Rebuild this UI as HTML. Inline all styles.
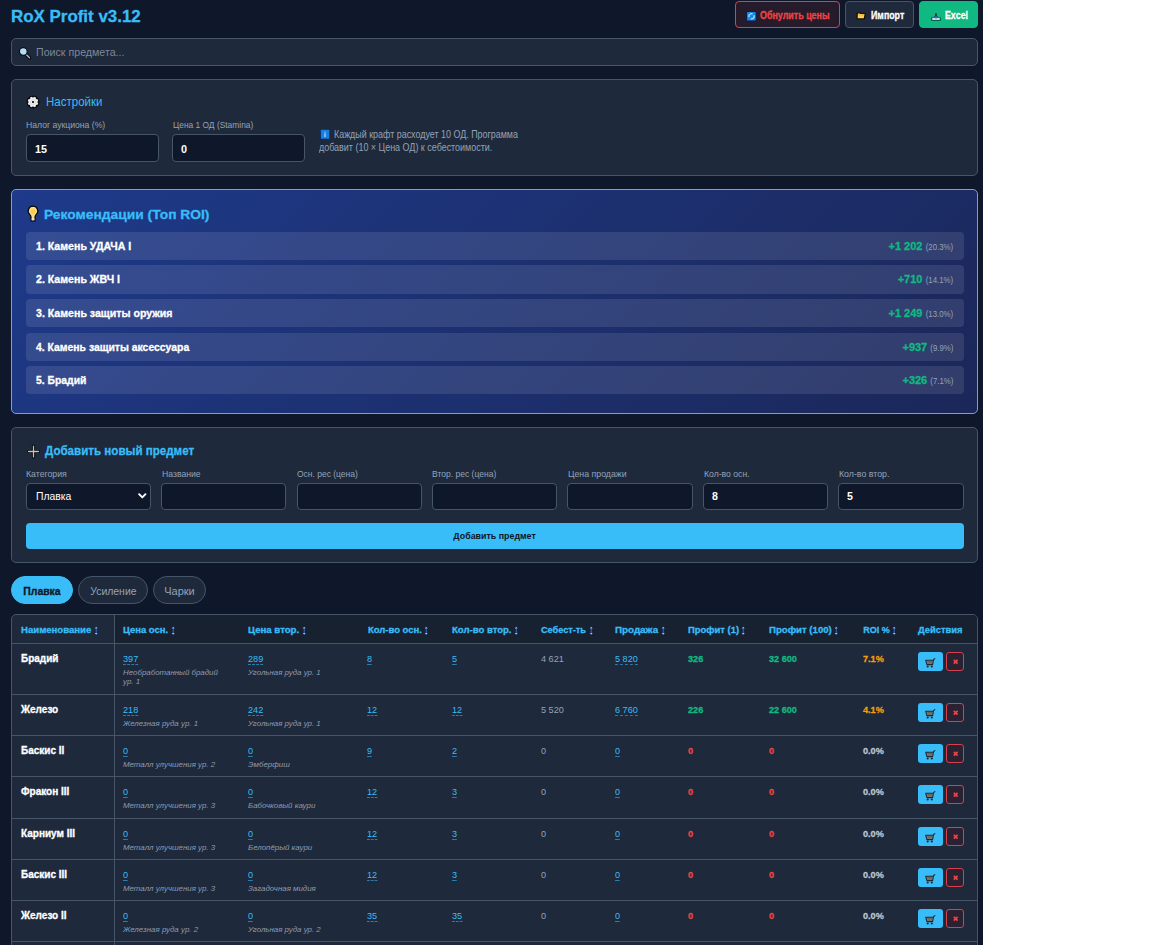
<!DOCTYPE html>
<html lang="ru"><head>
<meta charset="utf-8">
<title>RoX Profit v3.12</title>
<style>
*{box-sizing:border-box;margin:0;padding:0}
html,body{background:#fff;width:1152px;height:945px;overflow:hidden}
body{font-family:"Liberation Sans",sans-serif;color:#f1f5f9;font-size:11px;position:relative}
#app{position:absolute;left:0;top:0;width:983px;height:945px;background:#0f172a;overflow:hidden}
.abs{position:absolute}
h1,.hb,.rec .n,.rec .v,.row .nm,.row .gr,.row .rd,.row .or,.row .z,.th,.btn .t,#t1{-webkit-text-stroke:.3px currentColor}
.rec .v i{-webkit-text-stroke:0}
.t{position:absolute;white-space:nowrap;display:block}
svg{position:absolute;display:block;overflow:visible}
h1{position:absolute;left:11px;top:6px;font-size:16.5px;line-height:20px;font-weight:bold;color:#38bdf8;white-space:nowrap}
.btn{position:absolute;top:1px;height:27px;border-radius:4px;border:1px solid #475569;background:#1e293b;color:#fff;font-weight:bold;font-size:10.2px;line-height:12px}
.btn .t{top:8.3px}
#b1{left:735px;width:105px;border-color:#d9404a;background:#251b2b;color:#ef4444}
#b2{left:845px;width:69px}
#b3{left:919px;width:59px;background:#10b981;border-color:#10b981}
#search{position:absolute;left:11px;top:38px;width:967px;height:28px;border:1px solid #475569;border-radius:5px;background:#1e293b}
#search .t{left:24px;top:7px;line-height:13px;font-size:11px;color:#7d8899}
.panel{position:absolute;left:11px;width:967px;border:1px solid #475569;border-radius:5px;background:#1e293b}
.lbl{position:absolute;font-size:9.6px;line-height:12px;color:#94a3b8;white-space:nowrap}
.inp{position:absolute;height:27px;border:1px solid #475569;border-radius:4px;background:#0f172a;color:#fff;font-weight:bold;font-size:10.6px;line-height:25px;padding-left:8px;white-space:nowrap}
.h2{position:absolute;font-size:13px;line-height:16px;color:#38bdf8;white-space:nowrap}
#recs{position:absolute;left:11px;top:189px;width:967px;height:225px;border:1px solid #62a6f2;border-radius:5px;background:linear-gradient(135deg,#1e3a8a 0%,#1b2759 100%)}
.rec{position:absolute;left:14px;width:938px;height:28px;border-radius:4px;background:rgba(255,255,255,.1);font-weight:bold;font-size:10.6px;line-height:14px;color:#fff;white-space:nowrap}
.rec .n{position:absolute;left:10px;top:7px}
.rec .v{position:absolute;right:10.7px;top:7px;color:#10b981;font-size:11px}
.rec .v i{display:inline-block;font-style:normal;font-weight:normal;font-size:8.6px;color:#94a3b8;margin-left:-2.3px;transform:scaleX(.91);transform-origin:right center}
.tab{position:absolute;top:576px;height:28px;border-radius:14px;border:1px solid #475569;background:#1e293b;color:#94a3b8;font-size:11px;line-height:28px;text-align:center;white-space:nowrap}
.tab span{display:inline-block}
#t1{left:11px;width:62px;background:#38bdf8;border-color:#38bdf8;color:#0f172a;font-weight:bold;font-size:10.6px}
#t2{left:78px;width:70px}
#t3{left:153px;width:53px}
#tbl{position:absolute;left:11px;top:614px;width:967px;height:340px;border:1px solid #475569;border-radius:5px;background:#1e293b;overflow:hidden}
#thead{position:absolute;left:103px;top:0;width:864px;height:28px;background:#18212f}
.hl{position:absolute;left:0;width:965px;height:1px;background:#475569}
.vl{position:absolute;left:102px;top:0;width:1px;height:340px;background:#475569}
.fx{display:inline-block;vertical-align:top}
.th svg{position:static;display:inline-block;vertical-align:top;margin-left:2.4px;margin-top:1.6px}
.th{position:absolute;top:9px;font-size:9px;line-height:12px;font-weight:bold;color:#38bdf8;white-space:nowrap}
.row{position:absolute;left:0;width:965px;height:0}
.row span{position:absolute;white-space:nowrap;font-size:9.6px;line-height:12px;top:10px}
.row .e,.row .g,.row .gr,.row .rd,.row .or,.row .z{transform:scaleX(.95);transform-origin:left center}
.row .nm{left:9px;font-weight:bold;color:#fff;font-size:10px;top:10px}
.row .e{color:#38bdf8;border-bottom:1px dashed #2b7fb0;line-height:11px;top:10px}
.row .sub{top:26px;font-size:7.9px;line-height:8.6px;font-style:italic;color:#8e9bb0;white-space:normal;width:110px}
.row .g{color:#94a3b8}
.row .gr{color:#10b981;font-weight:bold}
.row .rd{color:#ef4444;font-weight:bold}
.row .or{color:#f59e0b;font-weight:bold}
.row .z{color:#bcc5d1;font-weight:bold}
.cart{position:absolute;left:906px;top:9px;width:25px;height:19px;border-radius:3px;background:#38bdf8}
.del{position:absolute;left:934px;top:9px;width:18px;height:19px;border-radius:3px;border:1px solid #d9404a;background:#2a2233}
</style>
</head>
<body>
<div id="app">
<h1 style="transform: scaleX(1.025); transform-origin: left center;">RoX Profit v3.12</h1>
<div class="btn" id="b1"><svg style="left:10.4px;top:8.5px" width="10.7" height="10.4" viewBox="0 0 10.7 10.4"><rect x="0" y="0" width="10.7" height="10.4" rx="1" fill="#0a1f4d"></rect><rect x="1.05" y="1" width="8.6" height="8.4" rx="0.4" fill="#1b84e0"></rect><circle cx="5.5" cy="5.3" r="2.6" fill="none" stroke="#a8e4ff" stroke-width="1.15" stroke-dasharray="6 2.17" transform="rotate(-25 5.5 5.3)"></circle></svg><span class="t" style="left: 24.3px; transform: scaleX(0.875); transform-origin: left center;">Обнулить цены</span></div>
<div class="btn" id="b2"><svg style="left:9.9px;top:10.3px" width="10" height="7.6" viewBox="0 0 10 7.6"><path d="M1.3 0.8 L4 0.7 L4.8 1.4 L9.3 1.6 L8.3 6.9 L0.9 6.9 Z" fill="#fbd262" stroke="#1a0f00" stroke-width="1.3" stroke-linejoin="round"></path><path d="M2 2.2 L8.4 2.4 L8 4 L1.8 4 Z" fill="#f8b93a" opacity=".7"></path></svg><span class="t" style="left: 24.8px; transform: scaleX(0.867); transform-origin: left center;">Импорт</span></div>
<div class="btn" id="b3"><svg style="left:10.9px;top:11px" width="10" height="8" viewBox="0 0 10 8"><path d="M4.1 0.2h1.8v2.7l2.3 1.3h1.5v3.6h-9.4v-3.6h1.5l2.3-1.3z" fill="#0a4032"></path><rect x="1.2" y="4.7" width="7.6" height="2.3" fill="#c5daf8"></rect><path d="M3 4.6l2-1.6 2 1.6z" fill="#5270b8"></path><rect x="4.2" y="5.2" width="1.6" height="0.9" fill="#6f8fd0"></rect></svg><span class="t" style="left: 24.8px; transform: scaleX(0.864); transform-origin: left center;">Excel</span></div>
<div id="search"><svg style="left:6px;top:7px" width="14" height="14" viewBox="0 0 14 14"><path d="M7.6 7.8 L11.6 11.8" stroke="#070b14" stroke-width="3.3" stroke-linecap="round"></path><path d="M8 8.2 L11.5 11.7" stroke="#b4bcc8" stroke-width="1.3" stroke-linecap="round"></path><circle cx="5.3" cy="5.5" r="3.9" fill="#b5dcf5" stroke="#070b14" stroke-width="1.2"></circle></svg><span class="t" style="transform: scaleX(0.968); transform-origin: left center;">Поиск предмета...</span></div>

<div class="panel" id="settings" style="top:79px;height:97px">
 <svg style="left:14.15px;top:14.8px" width="14" height="14" viewBox="0 0 14 14"><path d="M8.04 1.75 L9.97 2.55 L9.81 3.49 L10.51 4.19 L11.45 4.03 L12.25 5.96 L11.47 6.51 L11.47 7.49 L12.25 8.04 L11.45 9.97 L10.51 9.81 L9.81 10.51 L9.97 11.45 L8.04 12.25 L7.49 11.47 L6.51 11.47 L5.96 12.25 L4.03 11.45 L4.19 10.51 L3.49 9.81 L2.55 9.97 L1.75 8.04 L2.53 7.49 L2.53 6.51 L1.75 5.96 L2.55 4.03 L3.49 4.19 L4.19 3.49 L4.03 2.55 L5.96 1.75 L6.51 2.53 L7.49 2.53Z" fill="#ececec" stroke="#05070c" stroke-width="2.3" stroke-linejoin="round" paint-order="stroke"></path><circle cx="7" cy="7" r="2.6" fill="none" stroke="#d4d4d4" stroke-width="0.6"></circle><circle cx="7" cy="7" r="1.05" fill="#000"></circle></svg>
 <div class="h2" style="left: 33.6px; top: 14px; transform: scaleX(0.885); transform-origin: left center;">Настройки</div>
 <div class="lbl" style="left: 14px; top: 38.5px; transform: scaleX(0.899); transform-origin: left center;">Налог аукциона (%)</div>
 <div class="inp" style="left:14px;top:54px;width:133px;height:28px;line-height:28px;font-size:10.8px">15</div>
 <div class="lbl" style="left: 160.5px; top: 38.5px; transform: scaleX(0.875); transform-origin: left center;">Цена 1 ОД (Stamina)</div>
 <div class="inp" style="left:160px;top:54px;width:133px;height:28px;line-height:28px;font-size:10.8px">0</div>
 <svg style="left:307.9px;top:49.2px" width="10.1" height="10.7" viewBox="0 0 10.1 10.7"><rect x="0" y="0" width="10.1" height="10.7" rx="1" fill="#0a2a60"></rect><rect x="0.9" y="0.8" width="8.4" height="9" rx="0.4" fill="#1a80dc"></rect><rect x="4.2" y="4.4" width="1.6" height="3.6" fill="#8ccaff"></rect><rect x="4.2" y="2.8" width="1.6" height="1" fill="#7cc0f8"></rect></svg>
 <div class="lbl" style="left: 322px; top: 49.3px; font-size: 10px; transform: scaleX(0.892); transform-origin: left center;">Каждый крафт расходует 10 ОД. Программа</div>
 <div class="lbl" style="left: 306.7px; top: 61.6px; font-size: 10px; transform: scaleX(0.895); transform-origin: left center;">добавит (10 × Цена ОД) к себестоимости.</div>
</div>

<div id="recs">
 <svg style="left:14.6px;top:15.4px" width="12" height="17" viewBox="0 0 12 17"><path d="M6 1.2 A4.7 4.7 0 0 1 9.5 9.1 Q8 10.7 8 12.2 L8 15.8 L4 15.8 L4 12.2 Q4 10.7 2.5 9.1 A4.7 4.7 0 0 1 6 1.2Z" fill="#fcd97c" stroke="#05070c" stroke-width="1.25" stroke-linejoin="round"></path><circle cx="6" cy="6.8" r="2.4" fill="#f9c440" opacity=".75"></circle><rect x="4.65" y="13.2" width="2.7" height="2.1" fill="#e6e6e6"></rect></svg>
 <div class="h2 hb" style="left: 32px; top: 17px; font-weight: bold; font-size: 13.6px; transform: scaleX(1.016); transform-origin: left center;">Рекомендации (Топ ROI)</div>
 <div class="rec" style="top:42px"><span class="n">1. Камень УДАЧА I</span><span class="v">+1 202 <i>(20.3%)</i></span></div>
 <div class="rec" style="top:75px;height:29px"><span class="n">2. Камень ЖВЧ I</span><span class="v">+710 <i>(14.1%)</i></span></div>
 <div class="rec" style="top:109px"><span class="n">3. Камень защиты оружия</span><span class="v">+1 249 <i>(13.0%)</i></span></div>
 <div class="rec" style="top:143px"><span class="n" style="transform: scaleX(0.982); transform-origin: left center;">4. Камень защиты аксессуара</span><span class="v">+937 <i>(9.9%)</i></span></div>
 <div class="rec" style="top:176px"><span class="n" style="transform: scaleX(0.978); transform-origin: left center;">5. Брадий</span><span class="v">+326 <i>(7.1%)</i></span></div>
</div>

<div class="panel" id="add" style="top:427px;height:136px">
 <svg style="left:15px;top:16.9px" width="13" height="13" viewBox="0 0 13 13"><path d="M6.5 1.1 V11.9 M1.5 6.5 H11.5" stroke="#05070c" stroke-width="3.2" stroke-linecap="round" fill="none"></path><path d="M6.5 1.1 V11.9 M1.5 6.5 H11.5" stroke="#c2c2c2" stroke-width="1.3" stroke-linecap="round" fill="none"></path></svg>
 <div class="h2 hb" style="left: 32.8px; top: 15px; font-weight: bold; transform: scaleX(0.891); transform-origin: left center;">Добавить новый предмет</div>
 <div class="lbl" style="left: 13.6px; top: 39.8px; transform: scaleX(0.91); transform-origin: left center;">Категория</div>
 <div class="lbl" style="left: 149.5px; top: 39.8px; transform: scaleX(0.9); transform-origin: left center;">Название</div>
 <div class="lbl" style="left: 284.9px; top: 39.8px; transform: scaleX(0.884); transform-origin: left center;">Осн. рес (цена)</div>
 <div class="lbl" style="left: 420.3px; top: 39.8px; transform: scaleX(0.89); transform-origin: left center;">Втор. рес (цена)</div>
 <div class="lbl" style="left: 556.1px; top: 39.8px; transform: scaleX(0.914); transform-origin: left center;">Цена продажи</div>
 <div class="lbl" style="left: 691.5px; top: 39.8px; transform: scaleX(0.901); transform-origin: left center;">Кол-во осн.</div>
 <div class="lbl" style="left: 826.5px; top: 39.8px; transform: scaleX(0.916); transform-origin: left center;">Кол-во втор.</div>
 <div class="inp" style="left:14px;top:55px;width:125px;font-weight:normal;font-size:10.4px;padding-left:9px">Плавка<svg style="left:111px;top:9.2px" width="8.6" height="6" viewBox="0 0 8.6 6"><path d="M1.1 1.2 L4.3 4.4 L7.5 1.2" stroke="#fff" stroke-width="1.9" fill="none" stroke-linecap="round" stroke-linejoin="round"></path></svg></div>
 <div class="inp" style="left:149px;top:55px;width:125px"></div>
 <div class="inp" style="left:285px;top:55px;width:125px"></div>
 <div class="inp" style="left:420px;top:55px;width:125px"></div>
 <div class="inp" style="left:555px;top:55px;width:126px"></div>
 <div class="inp" style="left:691px;top:55px;width:125px">8</div>
 <div class="inp" style="left:826px;top:55px;width:126px">5</div>
 <div class="abs" style="left:14px;top:95px;width:938px;height:26px;border-radius:4px;background:#38bdf8;color:#0f172a;font-size:9.8px;font-weight:bold;line-height:26px;text-align:center"><span style="display: inline-block; transform: scaleX(0.904); transform-origin: center center;">Добавить предмет</span></div>
</div>

<div class="tab" id="t1"><span style="transform: scaleX(0.983); transform-origin: center center;">Плавка</span></div>
<div class="tab" id="t2"><span style="transform: scaleX(0.949); transform-origin: center center;">Усиление</span></div>
<div class="tab" id="t3"><span>Чарки</span></div>

<div id="tbl">
 <div id="thead"></div>
 <div class="vl"></div>
 <div class="th" style="left:8.9px"><span class="fx" style="transform: scaleX(1.065); transform-origin: left center; width: 70.3px;">Наименование</span><svg width="4.4" height="9.6" viewBox="0 0 4.4 9.6"><path d="M2.2 0 L4.4 2.9 H0Z M2.2 9.6 L4.4 6.7 H0Z" fill="#0b2350"></path><rect x="1.3" y="2" width="1.8" height="5.6" fill="#0b2350"></rect><path d="M2.2 0.8 L3.7 2.6 H0.7Z M2.2 8.8 L3.7 7 H0.7Z" fill="#8fd0ff"></path><rect x="1.75" y="2.4" width="0.9" height="4.8" fill="#4670bd"></rect></svg></div>
 <div class="th" style="left:111.3px"><span class="fx" style="transform: scaleX(1.05); transform-origin: left center; width: 45.1px;">Цена осн.</span><svg width="4.4" height="9.6" viewBox="0 0 4.4 9.6"><path d="M2.2 0 L4.4 2.9 H0Z M2.2 9.6 L4.4 6.7 H0Z" fill="#0b2350"></path><rect x="1.3" y="2" width="1.8" height="5.6" fill="#0b2350"></rect><path d="M2.2 0.8 L3.7 2.6 H0.7Z M2.2 8.8 L3.7 7 H0.7Z" fill="#8fd0ff"></path><rect x="1.75" y="2.4" width="0.9" height="4.8" fill="#4670bd"></rect></svg></div>
 <div class="th" style="left:236.3px"><span class="fx" style="transform: scaleX(1.07); transform-origin: left center; width: 51.2px;">Цена втор.</span><svg width="4.4" height="9.6" viewBox="0 0 4.4 9.6"><path d="M2.2 0 L4.4 2.9 H0Z M2.2 9.6 L4.4 6.7 H0Z" fill="#0b2350"></path><rect x="1.3" y="2" width="1.8" height="5.6" fill="#0b2350"></rect><path d="M2.2 0.8 L3.7 2.6 H0.7Z M2.2 8.8 L3.7 7 H0.7Z" fill="#8fd0ff"></path><rect x="1.75" y="2.4" width="0.9" height="4.8" fill="#4670bd"></rect></svg></div>
 <div class="th" style="left:355.6px"><span class="fx" style="transform: scaleX(1.052); transform-origin: left center; width: 53.9px;">Кол-во осн.</span><svg width="4.4" height="9.6" viewBox="0 0 4.4 9.6"><path d="M2.2 0 L4.4 2.9 H0Z M2.2 9.6 L4.4 6.7 H0Z" fill="#0b2350"></path><rect x="1.3" y="2" width="1.8" height="5.6" fill="#0b2350"></rect><path d="M2.2 0.8 L3.7 2.6 H0.7Z M2.2 8.8 L3.7 7 H0.7Z" fill="#8fd0ff"></path><rect x="1.75" y="2.4" width="0.9" height="4.8" fill="#4670bd"></rect></svg></div>
 <div class="th" style="left:439.7px"><span class="fx" style="transform: scaleX(1.061); transform-origin: left center; width: 59.5px;">Кол-во втор.</span><svg width="4.4" height="9.6" viewBox="0 0 4.4 9.6"><path d="M2.2 0 L4.4 2.9 H0Z M2.2 9.6 L4.4 6.7 H0Z" fill="#0b2350"></path><rect x="1.3" y="2" width="1.8" height="5.6" fill="#0b2350"></rect><path d="M2.2 0.8 L3.7 2.6 H0.7Z M2.2 8.8 L3.7 7 H0.7Z" fill="#8fd0ff"></path><rect x="1.75" y="2.4" width="0.9" height="4.8" fill="#4670bd"></rect></svg></div>
 <div class="th" style="left:529.3px"><span class="fx" style="transform: scaleX(1.018); transform-origin: left center; width: 45px;">Себест-ть</span><svg width="4.4" height="9.6" viewBox="0 0 4.4 9.6"><path d="M2.2 0 L4.4 2.9 H0Z M2.2 9.6 L4.4 6.7 H0Z" fill="#0b2350"></path><rect x="1.3" y="2" width="1.8" height="5.6" fill="#0b2350"></rect><path d="M2.2 0.8 L3.7 2.6 H0.7Z M2.2 8.8 L3.7 7 H0.7Z" fill="#8fd0ff"></path><rect x="1.75" y="2.4" width="0.9" height="4.8" fill="#4670bd"></rect></svg></div>
 <div class="th" style="left:603.3px"><span class="fx" style="transform: scaleX(1.089); transform-origin: left center; width: 43.1px;">Продажа</span><svg width="4.4" height="9.6" viewBox="0 0 4.4 9.6"><path d="M2.2 0 L4.4 2.9 H0Z M2.2 9.6 L4.4 6.7 H0Z" fill="#0b2350"></path><rect x="1.3" y="2" width="1.8" height="5.6" fill="#0b2350"></rect><path d="M2.2 0.8 L3.7 2.6 H0.7Z M2.2 8.8 L3.7 7 H0.7Z" fill="#8fd0ff"></path><rect x="1.75" y="2.4" width="0.9" height="4.8" fill="#4670bd"></rect></svg></div>
 <div class="th" style="left:675.5px"><span class="fx" style="transform: scaleX(1.048); transform-origin: left center; width: 51.1px;">Профит (1)</span><svg width="4.4" height="9.6" viewBox="0 0 4.4 9.6"><path d="M2.2 0 L4.4 2.9 H0Z M2.2 9.6 L4.4 6.7 H0Z" fill="#0b2350"></path><rect x="1.3" y="2" width="1.8" height="5.6" fill="#0b2350"></rect><path d="M2.2 0.8 L3.7 2.6 H0.7Z M2.2 8.8 L3.7 7 H0.7Z" fill="#8fd0ff"></path><rect x="1.75" y="2.4" width="0.9" height="4.8" fill="#4670bd"></rect></svg></div>
 <div class="th" style="left:757.1px"><span class="fx" style="transform: scaleX(1.068); transform-origin: left center; width: 62.8px;">Профит (100)</span><svg width="4.4" height="9.6" viewBox="0 0 4.4 9.6"><path d="M2.2 0 L4.4 2.9 H0Z M2.2 9.6 L4.4 6.7 H0Z" fill="#0b2350"></path><rect x="1.3" y="2" width="1.8" height="5.6" fill="#0b2350"></rect><path d="M2.2 0.8 L3.7 2.6 H0.7Z M2.2 8.8 L3.7 7 H0.7Z" fill="#8fd0ff"></path><rect x="1.75" y="2.4" width="0.9" height="4.8" fill="#4670bd"></rect></svg></div>
 <div class="th" style="left:851.3px"><span class="fx" style="width: 26.7px;">ROI %</span><svg width="4.4" height="9.6" viewBox="0 0 4.4 9.6"><path d="M2.2 0 L4.4 2.9 H0Z M2.2 9.6 L4.4 6.7 H0Z" fill="#0b2350"></path><rect x="1.3" y="2" width="1.8" height="5.6" fill="#0b2350"></rect><path d="M2.2 0.8 L3.7 2.6 H0.7Z M2.2 8.8 L3.7 7 H0.7Z" fill="#8fd0ff"></path><rect x="1.75" y="2.4" width="0.9" height="4.8" fill="#4670bd"></rect></svg></div>
 <div class="th" style="left:905.7px"><span class="fx" style="transform: scaleX(1.04); transform-origin: left center; width: 44.5px;">Действия</span></div>
 <div class="hl" style="top:28px"></div>
<div class="row" style="top:28px">
<span class="nm">Брадий</span>
<span class="e" style="left:111px">397</span><span class="sub" style="left:111px">Необработанный брадий<br>ур. 1</span>
<span class="e" style="left:236px">289</span><span class="sub" style="left:236px">Угольная руда ур. 1</span>
<span class="e" style="left:355px">8</span>
<span class="e" style="left:440px">5</span>
<span class="g" style="left:529px">4 621</span>
<span class="e" style="left:603px">5 820</span>
<span class="gr" style="left:676px">326</span>
<span class="gr" style="left:757px">32 600</span>
<span class="or" style="left:851px">7.1%</span>
<div class="cart"><svg style="left:7px;top:6.3px" width="11" height="10" viewBox="0 0 11 10"><path d="M9.9 0.6 L8.6 1.5 L7.6 6.6 L1.9 6.6 L0.7 2.2 L8.4 2.2" fill="#8c8474" stroke="#1c2a3a" stroke-width="1.1" stroke-linejoin="round" stroke-linecap="round"></path><path d="M2.3 3.6 H7.4 M2.6 5 H7.1" stroke="#5a5448" stroke-width="0.7"></path><circle cx="2.7" cy="8.5" r="1.05" fill="#1c2430"></circle><circle cx="6.8" cy="8.5" r="1.05" fill="#1c2430"></circle></svg></div><div class="del"><svg style="left:5.6px;top:6.2px" width="5.4" height="5.4" viewBox="0 0 5.4 5.4"><path d="M0.8 0.8 L4.6 4.6 M4.6 0.8 L0.8 4.6" stroke="#ef4444" stroke-width="1.7" stroke-linecap="butt"></path></svg></div>
</div>
<div class="row" style="top:79px">
<span class="nm">Железо</span>
<span class="e" style="left:111px">218</span><span class="sub" style="left:111px">Железная руда ур. 1</span>
<span class="e" style="left:236px">242</span><span class="sub" style="left:236px">Угольная руда ур. 1</span>
<span class="e" style="left:355px">12</span>
<span class="e" style="left:440px">12</span>
<span class="g" style="left:529px">5 520</span>
<span class="e" style="left:603px">6 760</span>
<span class="gr" style="left:676px">226</span>
<span class="gr" style="left:757px">22 600</span>
<span class="or" style="left:851px">4.1%</span>
<div class="cart"><svg style="left:7px;top:6.3px" width="11" height="10" viewBox="0 0 11 10"><path d="M9.9 0.6 L8.6 1.5 L7.6 6.6 L1.9 6.6 L0.7 2.2 L8.4 2.2" fill="#8c8474" stroke="#1c2a3a" stroke-width="1.1" stroke-linejoin="round" stroke-linecap="round"></path><path d="M2.3 3.6 H7.4 M2.6 5 H7.1" stroke="#5a5448" stroke-width="0.7"></path><circle cx="2.7" cy="8.5" r="1.05" fill="#1c2430"></circle><circle cx="6.8" cy="8.5" r="1.05" fill="#1c2430"></circle></svg></div><div class="del"><svg style="left:5.6px;top:6.2px" width="5.4" height="5.4" viewBox="0 0 5.4 5.4"><path d="M0.8 0.8 L4.6 4.6 M4.6 0.8 L0.8 4.6" stroke="#ef4444" stroke-width="1.7" stroke-linecap="butt"></path></svg></div>
</div>
<div class="row" style="top:120px">
<span class="nm">Баскис II</span>
<span class="e" style="left:111px">0</span><span class="sub" style="left:111px">Металл улучшения ур. 2</span>
<span class="e" style="left:236px">0</span><span class="sub" style="left:236px">Эмберфиш</span>
<span class="e" style="left:355px">9</span>
<span class="e" style="left:440px">2</span>
<span class="g" style="left:529px">0</span>
<span class="e" style="left:603px">0</span>
<span class="rd" style="left:676px">0</span>
<span class="rd" style="left:757px">0</span>
<span class="z" style="left:851px">0.0%</span>
<div class="cart"><svg style="left:7px;top:6.3px" width="11" height="10" viewBox="0 0 11 10"><path d="M9.9 0.6 L8.6 1.5 L7.6 6.6 L1.9 6.6 L0.7 2.2 L8.4 2.2" fill="#8c8474" stroke="#1c2a3a" stroke-width="1.1" stroke-linejoin="round" stroke-linecap="round"></path><path d="M2.3 3.6 H7.4 M2.6 5 H7.1" stroke="#5a5448" stroke-width="0.7"></path><circle cx="2.7" cy="8.5" r="1.05" fill="#1c2430"></circle><circle cx="6.8" cy="8.5" r="1.05" fill="#1c2430"></circle></svg></div><div class="del"><svg style="left:5.6px;top:6.2px" width="5.4" height="5.4" viewBox="0 0 5.4 5.4"><path d="M0.8 0.8 L4.6 4.6 M4.6 0.8 L0.8 4.6" stroke="#ef4444" stroke-width="1.7" stroke-linecap="butt"></path></svg></div>
</div>
<div class="row" style="top:161px">
<span class="nm">Фракон III</span>
<span class="e" style="left:111px">0</span><span class="sub" style="left:111px">Металл улучшения ур. 3</span>
<span class="e" style="left:236px">0</span><span class="sub" style="left:236px">Бабочковый каури</span>
<span class="e" style="left:355px">12</span>
<span class="e" style="left:440px">3</span>
<span class="g" style="left:529px">0</span>
<span class="e" style="left:603px">0</span>
<span class="rd" style="left:676px">0</span>
<span class="rd" style="left:757px">0</span>
<span class="z" style="left:851px">0.0%</span>
<div class="cart"><svg style="left:7px;top:6.3px" width="11" height="10" viewBox="0 0 11 10"><path d="M9.9 0.6 L8.6 1.5 L7.6 6.6 L1.9 6.6 L0.7 2.2 L8.4 2.2" fill="#8c8474" stroke="#1c2a3a" stroke-width="1.1" stroke-linejoin="round" stroke-linecap="round"></path><path d="M2.3 3.6 H7.4 M2.6 5 H7.1" stroke="#5a5448" stroke-width="0.7"></path><circle cx="2.7" cy="8.5" r="1.05" fill="#1c2430"></circle><circle cx="6.8" cy="8.5" r="1.05" fill="#1c2430"></circle></svg></div><div class="del"><svg style="left:5.6px;top:6.2px" width="5.4" height="5.4" viewBox="0 0 5.4 5.4"><path d="M0.8 0.8 L4.6 4.6 M4.6 0.8 L0.8 4.6" stroke="#ef4444" stroke-width="1.7" stroke-linecap="butt"></path></svg></div>
</div>
<div class="row" style="top:203px">
<span class="nm">Карниум III</span>
<span class="e" style="left:111px">0</span><span class="sub" style="left:111px">Металл улучшения ур. 3</span>
<span class="e" style="left:236px">0</span><span class="sub" style="left:236px">Белопёрый каури</span>
<span class="e" style="left:355px">12</span>
<span class="e" style="left:440px">3</span>
<span class="g" style="left:529px">0</span>
<span class="e" style="left:603px">0</span>
<span class="rd" style="left:676px">0</span>
<span class="rd" style="left:757px">0</span>
<span class="z" style="left:851px">0.0%</span>
<div class="cart"><svg style="left:7px;top:6.3px" width="11" height="10" viewBox="0 0 11 10"><path d="M9.9 0.6 L8.6 1.5 L7.6 6.6 L1.9 6.6 L0.7 2.2 L8.4 2.2" fill="#8c8474" stroke="#1c2a3a" stroke-width="1.1" stroke-linejoin="round" stroke-linecap="round"></path><path d="M2.3 3.6 H7.4 M2.6 5 H7.1" stroke="#5a5448" stroke-width="0.7"></path><circle cx="2.7" cy="8.5" r="1.05" fill="#1c2430"></circle><circle cx="6.8" cy="8.5" r="1.05" fill="#1c2430"></circle></svg></div><div class="del"><svg style="left:5.6px;top:6.2px" width="5.4" height="5.4" viewBox="0 0 5.4 5.4"><path d="M0.8 0.8 L4.6 4.6 M4.6 0.8 L0.8 4.6" stroke="#ef4444" stroke-width="1.7" stroke-linecap="butt"></path></svg></div>
</div>
<div class="row" style="top:244px">
<span class="nm">Баскис III</span>
<span class="e" style="left:111px">0</span><span class="sub" style="left:111px">Металл улучшения ур. 3</span>
<span class="e" style="left:236px">0</span><span class="sub" style="left:236px">Загадочная мидия</span>
<span class="e" style="left:355px">12</span>
<span class="e" style="left:440px">3</span>
<span class="g" style="left:529px">0</span>
<span class="e" style="left:603px">0</span>
<span class="rd" style="left:676px">0</span>
<span class="rd" style="left:757px">0</span>
<span class="z" style="left:851px">0.0%</span>
<div class="cart"><svg style="left:7px;top:6.3px" width="11" height="10" viewBox="0 0 11 10"><path d="M9.9 0.6 L8.6 1.5 L7.6 6.6 L1.9 6.6 L0.7 2.2 L8.4 2.2" fill="#8c8474" stroke="#1c2a3a" stroke-width="1.1" stroke-linejoin="round" stroke-linecap="round"></path><path d="M2.3 3.6 H7.4 M2.6 5 H7.1" stroke="#5a5448" stroke-width="0.7"></path><circle cx="2.7" cy="8.5" r="1.05" fill="#1c2430"></circle><circle cx="6.8" cy="8.5" r="1.05" fill="#1c2430"></circle></svg></div><div class="del"><svg style="left:5.6px;top:6.2px" width="5.4" height="5.4" viewBox="0 0 5.4 5.4"><path d="M0.8 0.8 L4.6 4.6 M4.6 0.8 L0.8 4.6" stroke="#ef4444" stroke-width="1.7" stroke-linecap="butt"></path></svg></div>
</div>
<div class="row" style="top:285px">
<span class="nm">Железо II</span>
<span class="e" style="left:111px">0</span><span class="sub" style="left:111px">Железная руда ур. 2</span>
<span class="e" style="left:236px">0</span><span class="sub" style="left:236px">Угольная руда ур. 2</span>
<span class="e" style="left:355px">35</span>
<span class="e" style="left:440px">35</span>
<span class="g" style="left:529px">0</span>
<span class="e" style="left:603px">0</span>
<span class="rd" style="left:676px">0</span>
<span class="rd" style="left:757px">0</span>
<span class="z" style="left:851px">0.0%</span>
<div class="cart"><svg style="left:7px;top:6.3px" width="11" height="10" viewBox="0 0 11 10"><path d="M9.9 0.6 L8.6 1.5 L7.6 6.6 L1.9 6.6 L0.7 2.2 L8.4 2.2" fill="#8c8474" stroke="#1c2a3a" stroke-width="1.1" stroke-linejoin="round" stroke-linecap="round"></path><path d="M2.3 3.6 H7.4 M2.6 5 H7.1" stroke="#5a5448" stroke-width="0.7"></path><circle cx="2.7" cy="8.5" r="1.05" fill="#1c2430"></circle><circle cx="6.8" cy="8.5" r="1.05" fill="#1c2430"></circle></svg></div><div class="del"><svg style="left:5.6px;top:6.2px" width="5.4" height="5.4" viewBox="0 0 5.4 5.4"><path d="M0.8 0.8 L4.6 4.6 M4.6 0.8 L0.8 4.6" stroke="#ef4444" stroke-width="1.7" stroke-linecap="butt"></path></svg></div>
</div>
<div class="hl" style="top:79px"></div>
<div class="hl" style="top:120px"></div>
<div class="hl" style="top:161px"></div>
<div class="hl" style="top:203px"></div>
<div class="hl" style="top:244px"></div>
<div class="hl" style="top:285px"></div>
<div class="hl" style="top:326px"></div>
</div>
</div>


</body></html>
